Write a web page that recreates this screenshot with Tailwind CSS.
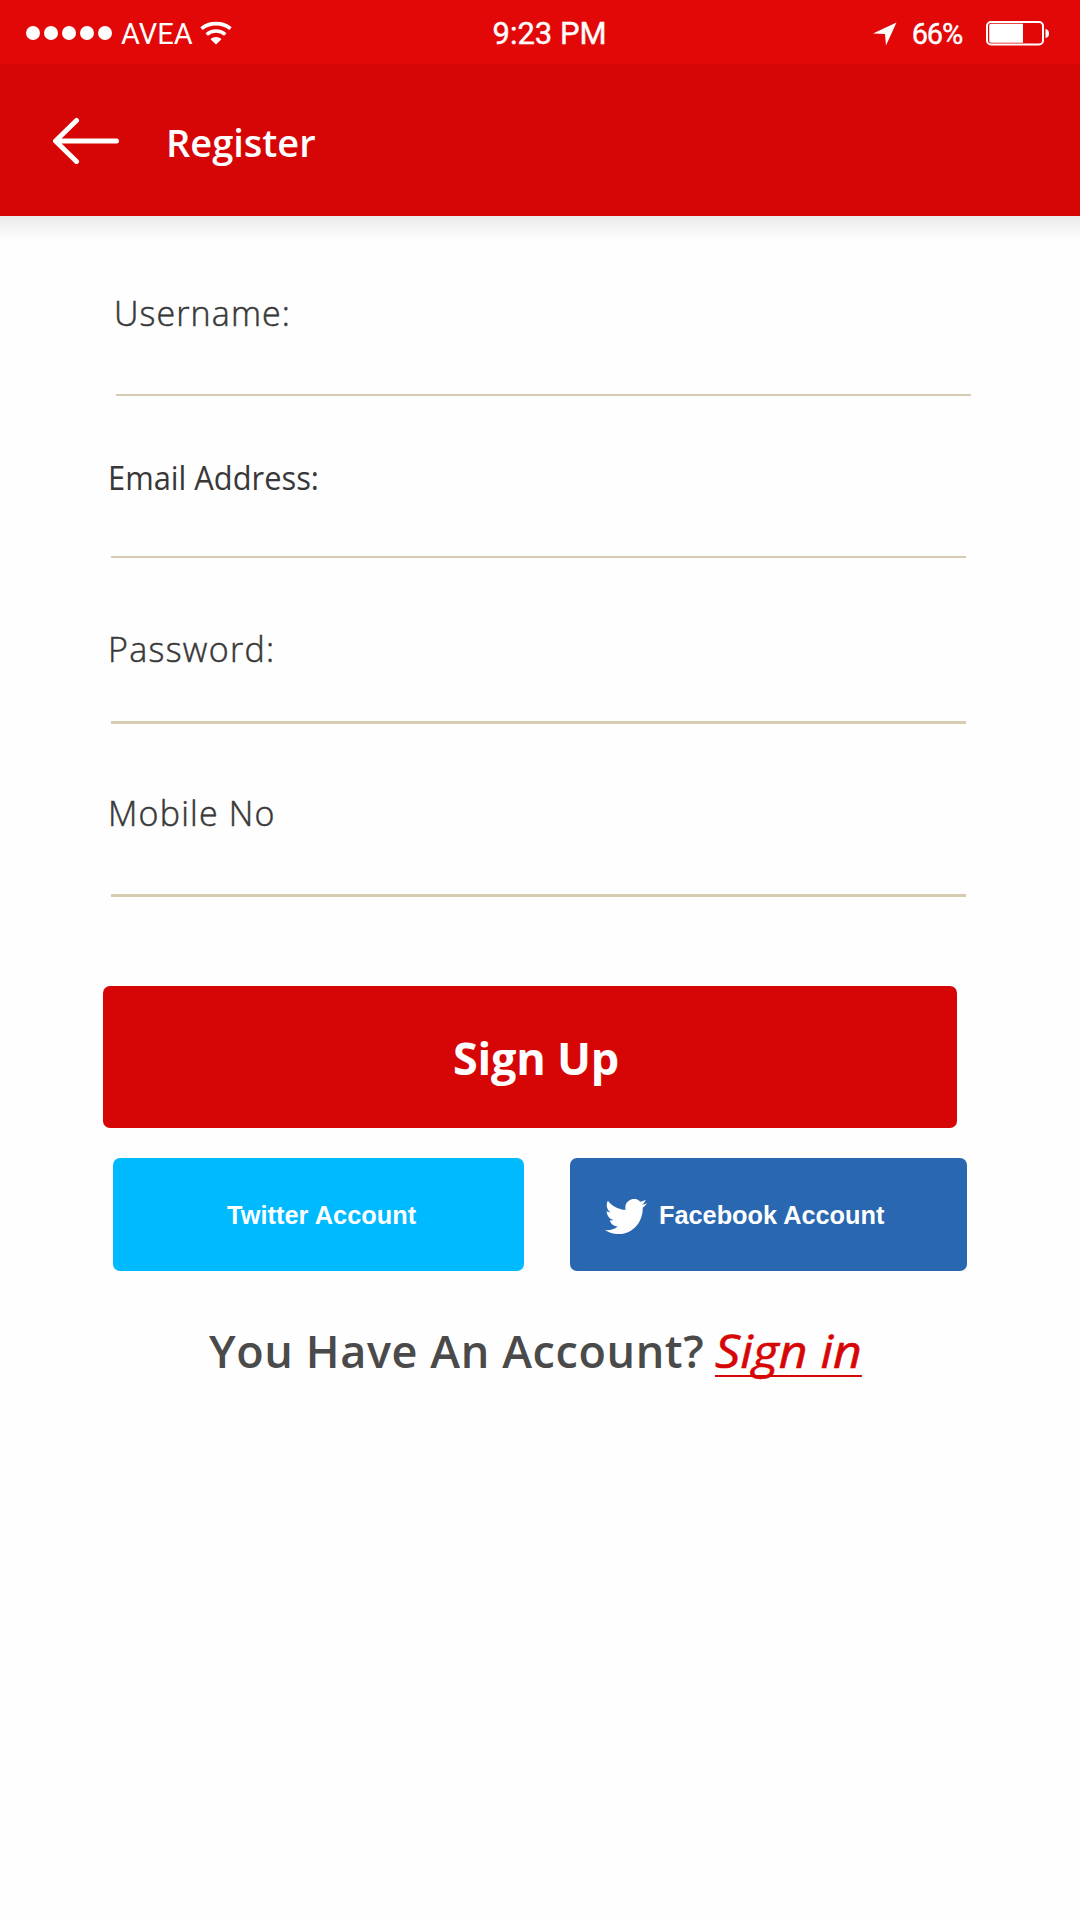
<!DOCTYPE html>
<html lang="en">
<head>
<meta charset="utf-8">
<title>Register</title>
<script src="https://cdn.jsdelivr.net/npm/@tailwindcss/browser@4"></script>
</head>
<body class="flex min-h-[1920px] w-[1080px] flex-col bg-[#fefefe] font-['Open_Sans',sans-serif] text-[#383838]">

  <!-- Status bar -->
  <div class="grid h-16 grid-cols-3 items-center bg-[#e30808] font-[Roboto,sans-serif] text-white">
    <div class="flex h-full items-center pt-0.5 pl-[26px]">
      <div class="flex gap-1">
        <span class="size-3.5 rounded-full bg-white"></span>
        <span class="size-3.5 rounded-full bg-white"></span>
        <span class="size-3.5 rounded-full bg-white"></span>
        <span class="size-3.5 rounded-full bg-white"></span>
        <span class="size-3.5 rounded-full bg-white"></span>
      </div>
      <span class="mt-0.5 ml-[9px] text-[29px] leading-10">AVEA</span>
      <svg class="ml-[7px] h-6 w-8" viewBox="0 0 32 24" fill="none" stroke="#fff" stroke-width="3.600">
        <path d="M1.500 7.600C9.500 .9 22.500 .9 30.500 7.600"/>
        <path d="M6.700 13.500C11.900 8.900 20.100 8.900 25.300 13.500"/>
        <path d="M16 23.500l-5.500-5.200c3-3 8-3 11 0z" fill="#fff" stroke="none"/>
      </svg>
    </div>
    <div class="pt-1 pl-[29px] text-center text-[31px] leading-10 whitespace-nowrap [-webkit-text-stroke:0.4px_white]"><span class="pr-2.5">9:23 PM</span></div>
    <div class="flex h-full items-center justify-end pt-[3px] pr-[30px]">
      <svg class="mr-[15px] h-6 w-6" viewBox="0 0 24 24" fill="#fff"><path d="M0 11.500L23.500.5L13 23.500L12 12z"/></svg>
      <span class="mr-[24px] text-[29px] leading-10 tracking-[-1.2px] [-webkit-text-stroke:0.4px_white]">66%</span>
      <svg class="h-[25px] w-16" viewBox="0 0 64 25" fill="none">
        <rect x="1" y="1" width="56" height="22.500" rx="4" stroke="#fff" stroke-width="2"/>
        <path d="M5 2.800H37V21.700H5Q3.200 21.700 3.200 20V4.500Q3.200 2.800 5 2.800z" fill="#fff"/>
        <path d="M59.500 8Q63 8.500 63 12.500T59.500 17z" fill="#fff"/>
      </svg>
    </div>
  </div>

  <!-- App bar -->
  <header class="flex h-[152px] items-center bg-[#d70606] pl-[52px] text-white">
    <svg class="h-12 w-[68px]" viewBox="0 0 68 48" fill="none" stroke="#fff" stroke-width="5" stroke-linecap="round" stroke-linejoin="round">
      <path d="M4 25H64.500M24.500 4.500L3.500 25L24.500 45.500"/>
    </svg>
    <h1 class="ml-[46px] pt-1 text-[38px] leading-12 font-semibold">Register</h1>
  </header>
  <div class="h-6 bg-linear-to-b from-[#ebebeb] to-[#fefefe]"></div>

  <main class="flex flex-col pt-[51px]">
    <label class="ml-[116px] block h-[105px] w-[855px] border-b-2 border-[#d5ccb1]">
      <span class="-ml-0.5 block text-[34px] leading-11 font-light tracking-[1.1px] [-webkit-text-stroke:0.5px_#383838]">Username:</span>
    </label>
    <label class="mt-[59px] ml-[111px] block h-[103px] w-[855px] border-b-2 border-[#d5ccb1]">
      <span class="-ml-[3px] block origin-left scale-x-92 text-[33.5px] leading-11">Email Address:</span>
    </label>
    <label class="mt-[69px] ml-[111px] block h-[97px] w-[855px] border-b-3 border-[#d5ccb1]">
      <span class="-ml-[3px] block text-[34px] leading-11 font-light tracking-[1.3px] [-webkit-text-stroke:0.5px_#383838]">Password:</span>
    </label>
    <label class="mt-[67px] ml-[111px] block h-[106px] w-[855px] border-b-3 border-[#d5ccb1]">
      <span class="-ml-[3px] block text-[34px] leading-11 font-light tracking-[1.2px] [-webkit-text-stroke:0.5px_#383838]">Mobile No</span>
    </label>

    <button class="mt-[89px] ml-[103px] h-[142px] w-[854px] rounded-[7px] bg-[#d70606] pl-[12px] text-[45px] leading-none font-bold tracking-[-0.25px] text-white">Sign Up</button>

    <div class="mt-[30px] ml-[113px] flex gap-[46px] font-['Liberation_Sans',sans-serif] text-[25.3px] leading-8 font-bold text-white">
      <button class="flex h-[113px] w-[411px] items-center rounded-[7px] bg-[#00baff] pl-[114px] tracking-[0.07px]">Twitter Account</button>
      <button class="flex h-[113px] w-[397px] items-center rounded-[7px] bg-[#2968b0] pl-[35px]">
        <svg class="mt-1 mr-[12px] h-[35px] w-[42px]" viewBox="0 2.250 24 19.500" preserveAspectRatio="none" fill="#fff">
          <path d="M23.953 4.570a10 10 0 01-2.825.775 4.958 4.958 0 002.163-2.723c-.951.555-2.005.959-3.127 1.184a4.920 4.920 0 00-8.384 4.482C7.690 8.095 4.067 6.130 1.640 3.162a4.822 4.822 0 00-.666 2.475c0 1.710.870 3.213 2.188 4.096a4.904 4.904 0 01-2.228-.616v.060a4.923 4.923 0 003.946 4.827 4.996 4.996 0 01-2.212.085 4.936 4.936 0 004.604 3.417 9.867 9.867 0 01-6.102 2.105c-.390 0-.779-.023-1.170-.067a13.995 13.995 0 007.557 2.209c9.053 0 13.998-7.496 13.998-13.985 0-.210 0-.420-.015-.630A9.935 9.935 0 0024 4.590z"/>
        </svg>
        <span>Facebook Account</span>
      </button>
    </div>

    <p class="mt-[50px] ml-[209px] flex text-[45px] leading-[60px] whitespace-nowrap">
      <span class="font-semibold tracking-[0.6px] text-[#4a4a4a]">You Have An Account?</span>
      <a class="ml-[11px] origin-left scale-x-111 font-normal text-[#d70606] italic underline decoration-2 underline-offset-[7px] [text-decoration-skip-ink:none] [-webkit-text-stroke:0.6px_#d70606]">Sign in</a>
    </p>
  </main>
</body>
</html>
